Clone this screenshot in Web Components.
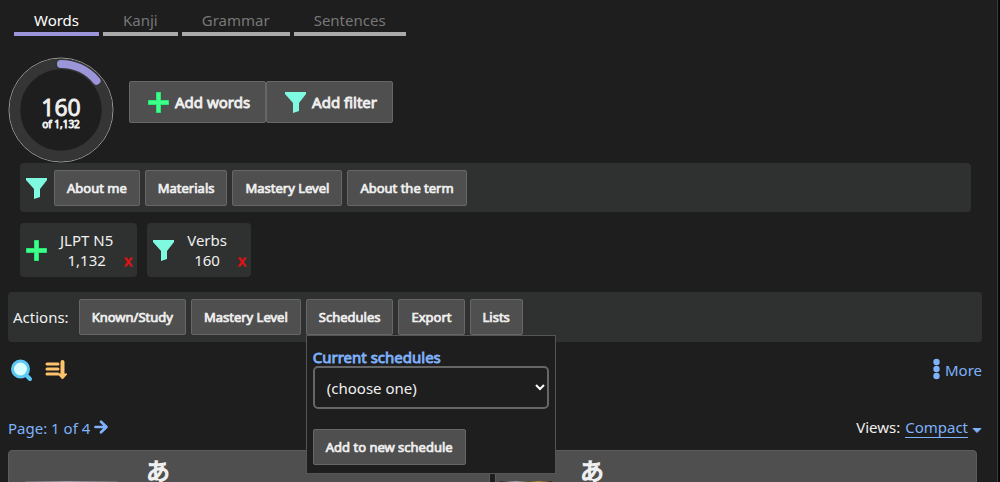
<!DOCTYPE html>
<html lang="en">
<head>
<meta charset="utf-8">
<meta name="viewport" content="width=device-width, initial-scale=1">
<title>Words</title>
<style>
  :root {
    --bg: #1e1e1e;
    --bar: #2f3130;
    --button: #4f4f4f;
    --edge: #676767;
    --text: #f0f0f0;
    --link: #7fb2fb;
    --heavy: 0.055em;
  }
  body {
    margin: 0;
    background: var(--bg);
    color: var(--text);
    font: 15px/20px "Noto Sans", "Noto Sans CJK JP", sans-serif;
  }
</style>
</head>
<body>
<study-page></study-page>

<script>
const define = (name, html, setup) => {
  const template = document.createElement('template');
  template.innerHTML = html;
  customElements.define(name, class extends HTMLElement {
    constructor() {
      super();
      this.attachShadow({ mode: 'open' }).append(template.content.cloneNode(true));
    }
    connectedCallback() {
      if (setup) setup(this, this.shadowRoot);
    }
  });
};

const icons = {
  plus: '<path d="M8.500 .500h4v8h8v4h-8v8h-4v-8h-8v-4h8z" fill="#3dff8c" stroke="#27e873"/>',
  filter: '<path d="M0 0h21v2l-7 9v8l-6 2v-10L0 2z" fill="#7ff9e0"/>',
  search: '<path d="M15 16l4 4" stroke="#5bc8f5" stroke-width="4" stroke-linecap="round"/><circle cx="9.500" cy="10" r="8" fill="#d8fdff" stroke="#5bc8f5" stroke-width="3"/>',
  sort: '<path d="M1 5h11M1 10h11M1 15h11" fill="none" stroke="#ffc46b" stroke-width="3" stroke-linecap="round"/><path d="M16.500 3v13" stroke="#ffc46b" stroke-width="4" stroke-linecap="round"/><path d="M12 15h9l-4.500 5z" fill="#ffc46b" stroke="#ffc46b" stroke-linejoin="round"/>',
  next: '<path d="M5.500 10h11M11 4.800l5.500 5.200-5.500 5.200" fill="none" stroke="currentColor" stroke-width="2.700" stroke-linecap="round" stroke-linejoin="round"/>',
  dots: '<circle cx="12.500" cy="3" r="3.200" fill="currentColor"/><circle cx="12.500" cy="10" r="3.200" fill="currentColor"/><circle cx="12.500" cy="17" r="3.200" fill="currentColor"/>',
  caret: '<path d="M5 11.500h8l-4 4z" fill="currentColor" stroke="currentColor" stroke-linejoin="round"/>'
};

define('app-icon', `
  <style>
    :host { display: block; flex: none; width: 21px; height: 21px; }
    svg { display: block; width: 100%; height: 100%; overflow: visible; }
  </style>
  <svg viewBox="0 0 21 21" aria-hidden="true"></svg>
`, (host, root) => {
  root.querySelector('svg').innerHTML = icons[host.getAttribute('name')];
});

define('app-button', `
  <style>
    :host { display: block; flex: none; }
    button {
      display: flex; align-items: center; gap: 6px;
      min-height: 36px; padding: 0 12px;
      border: 1px solid var(--edge); border-radius: 2px;
      background: var(--button); color: var(--text);
      font: inherit; font-size: 13px;
      -webkit-text-stroke: var(--heavy);
      white-space: nowrap; cursor: pointer;
    }
    :host([large]) button { min-height: 42px; padding: 0 15px 0 18px; font-size: 15px; }
  </style>
  <button type="button"><slot name="icon"></slot><slot></slot></button>
`);

define('tab-item', `
  <style>
    :host { display: block; }
    button {
      display: block; padding: 0 20px 1px;
      border: 0; border-bottom: 4px solid #aaa;
      background: none; color: #777; font: inherit; line-height: 22px; cursor: pointer;
    }
    :host([selected]) button { color: #fff; border-color: #9b95d9; }
  </style>
  <button type="button" role="tab"><slot></slot></button>
`);

define('tab-bar', `
  <style>
    :host { display: flex; gap: 4px; padding: 0 6px; }
  </style>
  <slot></slot>
`);

define('progress-ring', `
  <style>
    :host { display: grid; flex: none; width: 106px; height: 106px; place-items: center; }
    svg, .label { grid-area: 1 / 1; }
    .label { text-align: center; -webkit-text-stroke: var(--heavy); }
    .count { font-size: 23px; line-height: 20px; }
    .total { font-size: 10px; line-height: 14px; }
    .label { padding-top: 8px; }
  </style>
  <svg width="106" height="106" viewBox="0 0 106 106" aria-hidden="true">
    <circle cx="53" cy="53" r="52" fill="#1e1e1e" stroke="#999"/>
    <circle cx="53" cy="53" r="46" fill="none" stroke="#353535" stroke-width="10.500"/>
    <path d="M53 7A46 46 0 0 1 88.500 23.700" fill="none" stroke="#9b95d9" stroke-width="8" stroke-linecap="round"/>
  </svg>
  <div class="label">
    <div class="count"><slot name="count"></slot></div>
    <div class="total"><slot name="total"></slot></div>
  </div>
`);

define('tool-bar', `
  <style>
    :host {
      display: flex; align-items: center; gap: 5px;
      padding: 7px 5px; border-radius: 4px; background: var(--bar);
    }
    ::slotted(app-icon) { margin: 0 2px 0 1px; }
    ::slotted(span) { margin-right: 5px; }
  </style>
  <slot></slot>
`);

define('term-chip', `
  <style>
    :host {
      display: flex; align-items: center;
      padding: 7px 5px 7px 6px; border-radius: 4px; background: var(--bar);
    }
    .text { margin: 0 11px 0 13px; text-align: center; }
    button {
      align-self: flex-end; padding: 0; border: 0; background: none;
      color: #e01212; font: inherit; line-height: 20px; -webkit-text-stroke: var(--heavy); cursor: pointer;
    }
  </style>
  <slot name="icon"></slot>
  <div class="text"><div><slot></slot></div><div><slot name="count"></slot></div></div>
  <button type="button" aria-label="Remove">x</button>
`);

define('schedule-menu', `
  <style>
    :host { display: block; position: relative; }
    .panel {
      position: absolute; z-index: 2; top: 100%; left: 0;
      box-sizing: border-box; width: 250px; padding: 12px 6px 8px;
      border: 1px solid #555; background: var(--bg);
    }
    label { display: block; color: var(--link); -webkit-text-stroke: var(--heavy); line-height: 18px; }
    .box { position: relative; margin-bottom: 20px; }
    select {
      appearance: none; display: block; width: 100%; height: 43px; padding: 0 12px;
      border: 2px solid #666; border-radius: 5px;
      background: var(--bg); color: var(--text); font: inherit;
    }
    svg { position: absolute; top: 18px; right: 4px; pointer-events: none; }
  </style>
  <app-button>Schedules</app-button>
  <div class="panel">
    <label for="schedule">Current schedules</label>
    <div class="box">
      <select id="schedule"><option>(choose one)</option></select>
      <svg width="10" height="8" viewBox="0 0 10 8" aria-hidden="true"><path d="M1 1l4 4 4-4" fill="none" stroke="#fff" stroke-width="2"/></svg>
    </div>
    <app-button>Add to new schedule</app-button>
  </div>
`);

define('word-card', `
  <style>
    :host {
      display: grid; grid-template-columns: var(--media, 52px) auto; justify-content: start;
      column-gap: 28px; min-height: 120px;
      padding: 0 4px; border: 1px solid #5c5c5c; border-radius: 4px;
      background: var(--button); box-sizing: border-box;
    }
    .media { margin-top: 30px; height: 80px; background: linear-gradient(90deg, #2a2020, #9aa0a8 30%, #4a4a35 55%, #b08a3c 75%, #3a2020); }
    :host([pale]) .media { margin-left: 12px; background: linear-gradient(90deg, #666, #99a 45%, #666); }
    .term { font: 24px/38px "Noto Sans CJK JP", sans-serif; -webkit-text-stroke: var(--heavy); }
  </style>
  <div class="media"></div>
  <div class="term" lang="ja"><slot></slot></div>
`);

define('study-page', `
  <style>
    :host { display: flex; height: 100vh; overflow: hidden; }
    main { flex: 1; min-width: 0; padding: 9px 15px 0 8px; border-right: 1px solid #3a3d3e; }
    .edge { width: 2px; background: #06080b; }
    .row { display: flex; align-items: center; }
    .summary { gap: 15px; margin-top: 21px; }
    .summary .buttons { display: flex; margin-bottom: 16px; }
    .filters { margin: 0 11px 0 12px; padding: 7px 5px 6px; }
    .chips { gap: 10px; margin: 11px 11px 15px 12px; }
    .tools { justify-content: space-between; margin: 17px 0 37px; }
    .group { display: flex; align-items: center; gap: 14px; padding-left: 3px; }
    a { color: var(--link); text-decoration: none; }
    .icon-button { padding: 0; border: 0; background: none; cursor: pointer; }
    .more { display: flex; align-items: center; }
    .pager { justify-content: space-between; margin-bottom: 12px; }
    .pager a { display: flex; align-items: center; }
    .views { display: flex; gap: 5px; margin-right: -7px; }
    .views .name { border-bottom: 1px solid var(--link); line-height: 19px; }
    .cards { display: grid; grid-template-columns: 1fr 1fr; gap: 5px; margin-right: 5px; }
    .cards word-card:first-child { --media: 105px; }
  </style>
  <main>
    <tab-bar role="tablist">
      <tab-item selected>Words</tab-item>
      <tab-item>Kanji</tab-item>
      <tab-item>Grammar</tab-item>
      <tab-item>Sentences</tab-item>
    </tab-bar>
    <div class="row summary">
      <progress-ring><span slot="count">160</span><span slot="total">of 1,132</span></progress-ring>
      <div class="buttons">
        <app-button large><app-icon slot="icon" name="plus"></app-icon>Add words</app-button>
        <app-button large><app-icon slot="icon" name="filter"></app-icon>Add filter</app-button>
      </div>
    </div>
    <tool-bar class="filters">
      <app-icon name="filter"></app-icon>
      <app-button>About me</app-button>
      <app-button>Materials</app-button>
      <app-button>Mastery Level</app-button>
      <app-button>About the term</app-button>
    </tool-bar>
    <div class="row chips">
      <term-chip><app-icon slot="icon" name="plus"></app-icon>JLPT N5<span slot="count">1,132</span></term-chip>
      <term-chip><app-icon slot="icon" name="filter"></app-icon>Verbs<span slot="count">160</span></term-chip>
    </div>
    <tool-bar>
      <span>Actions:</span>
      <app-button>Known/Study</app-button>
      <app-button>Mastery Level</app-button>
      <schedule-menu></schedule-menu>
      <app-button>Export</app-button>
      <app-button>Lists</app-button>
    </tool-bar>
    <div class="row tools">
      <div class="group">
        <button class="icon-button" type="button" aria-label="Search"><app-icon name="search"></app-icon></button>
        <button class="icon-button" type="button" aria-label="Sort"><app-icon name="sort"></app-icon></button>
      </div>
      <a class="more" href="#more"><app-icon name="dots"></app-icon>More</a>
    </div>
    <div class="row pager">
      <a href="#next">Page: 1 of 4<app-icon name="next"></app-icon></a>
      <div class="views"><span>Views:</span><a href="#views"><span class="name">Compact</span><app-icon name="caret"></app-icon></a></div>
    </div>
    <div class="cards">
      <word-card pale>あ</word-card>
      <word-card>あ</word-card>
    </div>
  </main>
  <div class="edge"></div>
`);
</script>
</body>
</html>
